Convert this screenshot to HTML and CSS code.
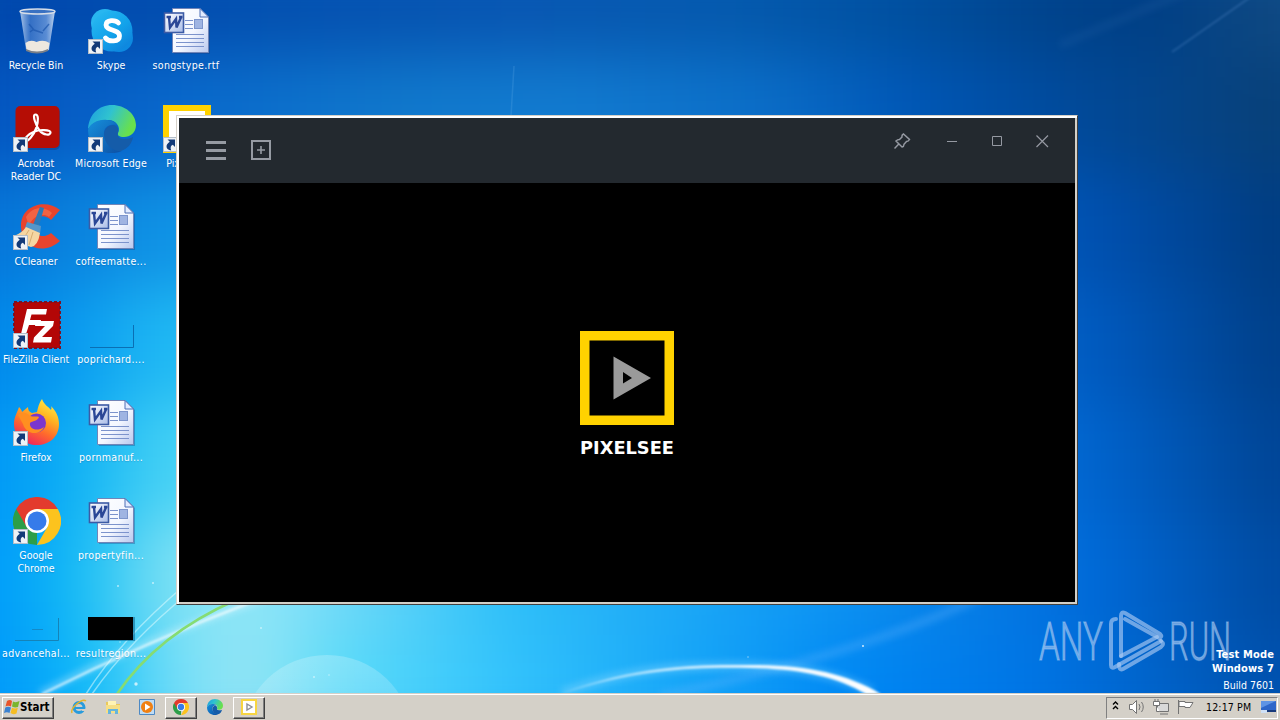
FILE: index.html
```html
<!DOCTYPE html>
<html lang="en">
<head>
<meta charset="utf-8">
<title>Desktop</title>
<link rel="stylesheet" href="styles.css">
</head>
<body>
<svg class="defs" aria-hidden="true">
  <defs>
    <linearGradient id="paper" x1="0" y1="0" x2="1" y2="1"><stop offset="0" stop-color="#fff"/><stop offset=".55" stop-color="#f4f7ff"/><stop offset="1" stop-color="#b9c8ee"/></linearGradient>
    <linearGradient id="wbox" x1="0" y1="0" x2="1" y2="1"><stop offset="0" stop-color="#fff"/><stop offset="1" stop-color="#a9bce8"/></linearGradient>
    <linearGradient id="edgeTop" x1="0" y1="0" x2="1" y2=".35"><stop offset="0" stop-color="#1b9de0"/><stop offset=".5" stop-color="#30c3cf"/><stop offset="1" stop-color="#68e04e"/></linearGradient>
    <linearGradient id="edgeLow" x1="0" y1="0" x2="1" y2="1"><stop offset="0" stop-color="#1690dc"/><stop offset="1" stop-color="#0c4fa4"/></linearGradient>
    <linearGradient id="fire" x1=".8" y1="0" x2=".3" y2="1"><stop offset="0" stop-color="#fff04a"/><stop offset=".35" stop-color="#ffb321"/><stop offset=".65" stop-color="#ff6a2c"/><stop offset="1" stop-color="#ee1f61"/></linearGradient>
    <symbol id="shortcut" viewBox="0 0 15 15">
      <rect x=".5" y=".5" width="14" height="14" fill="#eef2f6" stroke="#b4bec9"/>
      <path d="M4.500 2.500H12V10L9.800 7.800C7.800 8.500 7 10.500 8.200 13.500 2.500 13 2 7.500 6.800 4.800z" fill="#123a78"/>
    </symbol>
    <symbol id="word" viewBox="0 0 48 48">
      <path d="M11 2H38L47 11V47H11z" fill="#1c3f7e" opacity=".35"/>
      <path d="M9.500 1.500H37l8.500 8.500v35.500h-36z" fill="url(#paper)" stroke="#7185b8"/>
      <path d="M37 1.500V10h8.500z" fill="#e3ecff" stroke="#4f6fb5"/>
      <path d="M22 13.500h8M22 17.500h8M22 21.500h8M13 27.500h28M13 31.500h28M13 35.500h28M13 39.500h28" stroke="#7c93cc"/>
      <rect x="31.500" y="12.500" width="8" height="9" fill="#9fb4e2" stroke="#7d95cc"/>
      <rect x="1.500" y="6" width="19" height="19.500" fill="url(#wbox)" stroke="#3c5ba5" stroke-width="1.600"/>
      <path d="M3.500 10H8M16 10h3.500M6 10.500l1 10L13 12l.5 8.500L18 10.500" fill="none" stroke="#2a4696" stroke-width="2.400"/>
    </symbol>
    <symbol id="chrome" viewBox="0 0 48 48">
      <path d="M24 24V48A24 24 0 0 1 3.200 12z" fill="#2d9e49"/>
      <path d="M24 12H44.800A24 24 0 0 0 3.200 12L13.600 30z" fill="#e33b2e"/>
      <path d="M34.400 30L24 48A24 24 0 0 0 44.800 12H24z" fill="#fcc31e"/>
      <circle cx="24" cy="24" r="12" fill="#fff"/><circle cx="24" cy="24" r="9.500" fill="#367bea"/>
    </symbol>
    <symbol id="edge" viewBox="0 0 48 48">
      <path d="M0 24C1 9 11 0 24 0s24 9 24 20c0 8-6 12-12 12-5 0-7-2-6-4 3-5-1-13-10-13C11 15 4 18 0 24z" fill="url(#edgeTop)"/>
      <path d="M0 25C2 18 11 14 19 15c5 .600 8 2 10 5-8-2-14 3-13 10 1 9 9 16 18 16C17 53 0 43 0 25z" fill="url(#edgeLow)"/>
      <path d="M16 29c0-5 4-9 9-9 4 0 6 4 5 8-1 3 1 6 6 6 4 0 7-1 9-2-1 7-6 12-12 14-9 1-17-8-17-17z" fill="#155ca9"/>
    </symbol>
    <symbol id="pixel" viewBox="0 0 94 94">
      <rect x="4.750" y="4.750" width="84.500" height="84.500" fill="none" stroke="#ffd200" stroke-width="9.500"/>
      <path fill-rule="evenodd" d="M33.500 25.500L71 47 33.500 68.500zM43 41v11.500L52 47z" fill="#9a9a9a"/>
    </symbol>
  </defs>
</svg>
<main class="desktop">
  <div class="sky">
    <div class="band b1"></div><div class="band b2"></div><div class="band b3"></div><div class="band b4"></div><div class="band b5"></div><div class="band b6"></div><div class="band b7"></div>
  </div>
  <svg class="rays" viewBox="0 0 1280 720">
    <defs>
      <filter id="s1" x="-20%" y="-20%" width="140%" height="140%"><feGaussianBlur stdDeviation="1"/></filter>
      <filter id="s3" x="-20%" y="-50%" width="140%" height="200%"><feGaussianBlur stdDeviation="3.500"/></filter>
      <linearGradient id="halo" x1="0" y1="0" x2="0" y2="1"><stop offset="0" stop-color="#fff" stop-opacity=".22"/><stop offset="1" stop-color="#fff" stop-opacity="0"/></linearGradient>
      <linearGradient id="arc" x1="0" x2="1" y1="0" y2="0"><stop offset="0" stop-color="#fff" stop-opacity=".4"/><stop offset=".6" stop-color="#fff" stop-opacity=".9"/><stop offset="1" stop-color="#fff"/></linearGradient>
    </defs>
    <path d="M40 694Q150 635 290 590" fill="none" stroke="#fff" stroke-width="6" opacity=".35" filter="url(#s3)"/>
    <path d="M42 694Q150 640 270 595" fill="none" stroke="#fff" stroke-width="2.500" opacity=".65" filter="url(#s1)"/>
    <path d="M86 694Q120 640 185 585M92 694Q130 640 190 592" fill="none" stroke="#e6fdff" stroke-width="1.500" opacity=".5"/>
    <path d="M117 694Q158 634 236 600" fill="none" stroke="#86dc72" stroke-width="2.500"/>
    <ellipse cx="327" cy="735" rx="84" ry="80" fill="url(#halo)"/>
    <path d="M660 696Q860 655 985 595" fill="none" stroke="#6bb8ff" stroke-width="9" opacity=".28" filter="url(#s3)"/>
    <path d="M562 693C640 664 700 666 750 666C800 667 840 675 872 692" fill="none" stroke="#7fd4ff" stroke-width="9" opacity=".45" filter="url(#s3)"/>
    <path d="M560 694C640 664 700 665 750 665C805 665 845 673 881 694H866C835 676 800 669 750 668C700 667 640 668 560 694z" fill="url(#arc)" filter="url(#s1)"/>
    <path d="M1172 52L1252 -4" stroke="#5b8fce" stroke-width="2" opacity=".3" filter="url(#s1)"/>
    <path d="M1060 45L1190 -10" stroke="#4b80c0" stroke-width="8" opacity=".12" filter="url(#s3)"/>
    <path d="M514 66L511 116" stroke="#72b8ee" stroke-width="1.500" opacity=".2"/>
    <g fill="#fff"><circle cx="136" cy="684" r="1.700" opacity=".7"/><circle cx="118" cy="586" r="1" opacity=".6"/><circle cx="153" cy="583" r="1" opacity=".6"/><circle cx="120" cy="642" r=".8" opacity=".5"/><circle cx="261" cy="628" r="1" opacity=".5"/><circle cx="863" cy="646" r="1" opacity=".8"/><circle cx="748" cy="657" r=".8" opacity=".5"/><circle cx="314" cy="677" r="1" opacity=".5"/><circle cx="329" cy="675" r=".8" opacity=".5"/></g>
  </svg>

  <section class="icons">
    <div class="item"><svg viewBox="0 0 48 48"><defs><linearGradient id="bin"><stop offset="0" stop-color="#c9dcf4" stop-opacity=".85"/><stop offset=".3" stop-color="#5f8fd6" stop-opacity=".55"/><stop offset=".75" stop-color="#88aee6" stop-opacity=".65"/><stop offset="1" stop-color="#d6e4f5" stop-opacity=".9"/></linearGradient></defs><path d="M7 4H42L36 43Q24 48 13 43z" fill="url(#bin)"/><path d="M12.500 36q5-4 11-1 7-3 13 1l-1 7Q24 48 13.500 43z" fill="#eee8df"/><path d="M13 42q11 5 22 0v2q-11 5-22 0z" fill="#777e88"/><ellipse cx="24.500" cy="4.500" rx="17.500" ry="2.500" fill="#3971c2" stroke="#d6dde7" stroke-width="1.500"/><path d="M16 17l5 6 9 3M30 24l6-7M17 25l4-3" stroke="#1c57ae" stroke-width="1.500" fill="none" opacity=".7"/></svg><span class="label">Recycle Bin</span></div>
    <div class="item"><svg viewBox="0 0 48 48"><defs><linearGradient id="sky" x2=".8" y2="1"><stop offset="0" stop-color="#2bbcf2"/><stop offset=".6" stop-color="#12a2ea"/><stop offset="1" stop-color="#0f82dc"/></linearGradient></defs><circle cx="17" cy="16" r="14" fill="#28b6f0"/><circle cx="31" cy="31" r="14" fill="#0d8ae0"/><circle cx="24" cy="24" r="20.500" fill="url(#sky)"/><path d="M30.500 16C27.500 12.500 18 12.500 18 18C18 24 31.500 22 31.500 29C31.500 35.500 20.500 35 17.500 31" fill="none" stroke="#fff" stroke-width="4.800" stroke-linecap="round"/></svg><svg class="cut"><use href="#shortcut"/></svg><span class="label">Skype</span></div>
    <div class="item"><svg><use href="#word"/></svg><span class="label wide">songstype.rtf</span></div>

    <div class="item"><svg viewBox="0 0 48 48"><rect x="4" y="3" width="43" height="42" rx="5" fill="#123d82" opacity=".5"/><rect x="2.500" y="1" width="44" height="42" rx="5" fill="#b50d05"/><path d="M22.500 9.500c-4 0 1 12 4 16 4 5 11 5 11 2 0-3-12-3-16-1-5 2-11 7-9 9s8-5 11-13c2-7 2-13-1-13z" fill="none" stroke="#fff" stroke-width="2.200"/></svg><svg class="cut"><use href="#shortcut"/></svg><span class="label">Acrobat<br>Reader DC</span></div>
    <div class="item"><svg><use href="#edge"/></svg><svg class="cut"><use href="#shortcut"/></svg><span class="label mid">Microsoft Edge</span></div>
    <div class="item"><svg viewBox="0 0 48 48"><rect width="48" height="48" fill="#ffd200"/><rect x="6" y="6" width="36" height="36" fill="#fff"/></svg><svg class="cut"><use href="#shortcut"/></svg><span class="label">PixelSee</span></div>

    <div class="item"><svg viewBox="0 0 48 48"><path d="M47 7C33-5 7 2 8 24s24 28 39 14l-9-8c-9 7-17 1-17-7s9-14 17-6z" fill="#e8442d"/><path d="M39 10C33 4 20 2 13 14l3 9c4-11 15-13 20-9z" fill="#f36b48" opacity=".8"/><path d="M27 4l4 1-5 18-6-1z" fill="#2b79b7"/><path d="M14 19l14 4-1 8-15-6z" fill="#5496ca"/><path d="M13 24l14 6q-2 13-9 14Q5 41 1 33q8-3 12-9z" fill="#f5d6a2"/><path d="M16 27L9 38M20 29l-4 13" stroke="#d7ac70"/></svg><svg class="cut"><use href="#shortcut"/></svg><span class="label">CCleaner</span></div>
    <div class="item"><svg><use href="#word"/></svg><span class="label wide">coffeematte...</span></div>

    <div class="item"><svg viewBox="0 0 48 48"><rect x="1" y="1" width="46" height="46" fill="#b30606"/><rect x="1" y="1" width="46" height="46" fill="none" stroke="#7d1022" stroke-width="2" stroke-dasharray="3 2"/><path d="M8 33L14 8h20l-1 5.500H18.500L17 19h11l-1 5H16l-3 9z" fill="#fff"/><path d="M23 20h18l-1 5-11 11h10l-1 5.500H20l1-5L32 25h-10z" fill="#fff"/></svg><svg class="cut"><use href="#shortcut"/></svg><span class="label">FileZilla Client</span></div>
    <div class="item"><svg viewBox="0 0 48 48"><path d="M2 46.500H45.500V24" fill="none" stroke="#0a6fb4"/></svg><span class="label wide">poprichard....</span></div>

    <div class="item"><svg viewBox="0 0 48 48"><path d="M29 0c2 6 7 8 9 11 1-2 0-4 0-4 5 5 8 11 8 18 0 13-10 21-22 21S1 38 1 25C1 18 4 14 6 8c2 2 3 4 3 5l6-5c0 3 1 5 4 6l5-1C25 8 26 4 29 0z" fill="url(#fire)"/><circle cx="23.500" cy="24" r="9.500" fill="#7a36cf"/><path d="M5 16c5-4 9-2 12 1 3 1 8 0 9 1-1 4-7 4-9 6-1 6 7 9 14 4-4 9-18 8-21-3z" fill="#ff8f20"/></svg><svg class="cut"><use href="#shortcut"/></svg><span class="label">Firefox</span></div>
    <div class="item"><svg><use href="#word"/></svg><span class="label wide">pornmanuf...</span></div>

    <div class="item"><svg><use href="#chrome"/></svg><svg class="cut"><use href="#shortcut"/></svg><span class="label">Google<br>Chrome</span></div>
    <div class="item"><svg><use href="#word"/></svg><span class="label wide">propertyfin...</span></div>

    <div class="item"><svg viewBox="0 0 48 48"><path d="M2 45.500H45.500V23" fill="none" stroke="#1583b8"/><path d="M19 34.500H30" stroke="#138ac8"/></svg><span class="label wide">advancehal...</span></div>
    <div class="item"><svg viewBox="0 0 48 48"><rect x="1" y="22" width="46" height="24" fill="#126b95" opacity=".6"/><rect x="0" y="22" width="45" height="23"/></svg><span class="label wide">resultregion...</span></div>
  </section>

  <svg class="watermark" viewBox="0 0 200 70">
    <g class="wm-text"><text x="4" y="54" textLength="64" lengthAdjust="spacingAndGlyphs">ANY</text><text x="134" y="54" textLength="62" lengthAdjust="spacingAndGlyphs">RUN</text></g>
    <g fill="none" stroke="#a9caf2" stroke-opacity=".65" stroke-width="4" stroke-linejoin="round" stroke-linecap="round"><path d="M81 13Q76 13 76 18V59Q76 63 80 61L126 35"/><path d="M86 50V10Q86 5 90 7L125 28Q128 31 124 32L90 13"/><path d="M86 50L122 31M126 35Q130 38 126 41L88 63Q84 65 84 58"/></g>
  </svg>
  <div class="build"><b>Test Mode</b><b>Windows 7</b><span>Build 7601</span></div>

  <section class="window">
    <header class="titlebar">
      <svg class="menu" viewBox="0 0 68 22"><path d="M0 2.500H20M0 10.500H20M0 18.500H20" stroke="#969ba3" stroke-width="3"/><path d="M46 1H64V19H46z" fill="none" stroke="#969ba3" stroke-width="2"/><path d="M55 6v8M51 10h8" stroke="#969ba3" stroke-width="1.600"/></svg>
      <svg class="controls" viewBox="0 0 156 18"><g fill="none" stroke="#9599a2"><path d="M9.500 2L15.500 7.500Q14.500 9.500 12.500 9.500L10 12.200Q10 14.500 8 15L2 9Q3.500 7.500 5.500 7.500L8 5Q7.500 3 9.500 2zM4.800 12L.5 16.500" stroke-width="1.500"/><path d="M53 9.500H63M98.500 4.500H107.500V13.500H98.500z"/><path d="M142.500 3.500L154 15M154 3.500L142.500 15" stroke-width="1.200"/></g></svg>
    </header>
    <div class="stage"><svg class="logo"><use href="#pixel"/></svg><div class="brand">PIXELSEE</div></div>
  </section>

  <footer class="taskbar">
    <div class="start raised"><svg viewBox="0 0 16 16"><path d="M3 2Q6 0 8 2L7 7.500Q4 6 1.500 7.500z" fill="#e8542a"/><path d="M9 2.500Q12 4 15.500 2L14 8Q11 9 8 7.500z" fill="#7ab52e"/><path d="M1.300 8.500Q4 7 7 8.500L5.500 14Q3 12.500 0 14z" fill="#3b82d1"/><path d="M8 8.700Q11 10 13.800 8.800L12.500 14.500Q9 16 6.500 14z" fill="#f6bd23"/></svg><b>Start</b></div>
    <div class="quick">
      <span class="slot"><svg viewBox="0 0 16 16"><circle cx="8" cy="8.500" r="5" fill="none" stroke="#289bdc" stroke-width="3"/><path d="M4 9h9" stroke="#289bdc" stroke-width="2"/><path d="M10 10h6v2h-5z" fill="#d4d0c8"/><path d="M1 14C-1 9 11-1 15 2" fill="none" stroke="#e4b42c" stroke-width="1.500"/></svg></span>
      <span class="slot"><svg viewBox="0 0 16 16"><path d="M1 3h5l1 2h8v9H1z" fill="#e9c95c"/><path d="M3 2h8v5H3z" fill="#fff4b5"/><path d="M1 6h14v8H1z" fill="#f6df86"/><path d="M3 15v-5h10v5h-3v-3H6v3z" fill="#66b5dc"/></svg></span>
      <span class="slot"><svg viewBox="0 0 16 16"><path d="M.5.500h15v15H.5z" fill="#bfdcf4" stroke="#4d89c4"/><circle cx="8" cy="8" r="6" fill="#f08013"/><path d="M6 4.500l5.500 3.500L6 11.500z" fill="#fff"/></svg></span>
      <span class="slot raised"><svg><use href="#chrome"/></svg></span>
      <span class="slot"><svg><use href="#edge"/></svg></span>
      <span class="slot raised"><svg viewBox="0 0 16 16"><path d="M1 1h14v14H1z" fill="#fff" stroke="#f7d542" stroke-width="2"/><path d="M6 5l5 3-5 3z" fill="none" stroke="#8d8f97" stroke-width="1.400"/></svg></span>
    </div>
    <div class="tray">
      <svg viewBox="0 0 90 18"><path d="M4 6.500L6.500 4 9 6.500M4 11L6.500 8.500 9 11" fill="none" stroke="#000" stroke-width="1.400"/><g fill="#fff" stroke="#737373"><path d="M20.500 6.500h3l4-4v13l-4-4h-3z"/><path d="M30 6q2 3 0 6M32.500 4q3.500 5 0 10" fill="none"/><path d="M48.500 5.500h11v8h-11zM51 16h8" fill="#d9d9d9"/><path d="M44.500 3.500h6v4h-6zM46 1v3M49 1v3M47.500 7.500v6h3"/><path d="M69.500 2v14" /><path d="M70 3.500h6v1h8l-3 5h-5v-1h-6z"/></g></svg>
      <time>12:17 PM</time>
      <svg class="show" viewBox="0 0 16 14"><path d="M0 1h15v11H0z" fill="#2d66c9"/><path d="M0 1h15L0 8z" fill="#5e94e5"/><path d="M0 10h6v3H0z" fill="#cfe0f5"/><path d="M6 10h9v2H6z" fill="#183a7b"/></svg>
    </div>
  </footer>
</main>
</body>
</html>
```
FILE: styles.css
```css
* { box-sizing: border-box; }
body { margin: 0; font: 10.5px/13px "DejaVu Sans Condensed", "DejaVu Sans", sans-serif; overflow: hidden; }
.defs { position: absolute; width: 0; height: 0; }
.desktop { position: relative; width: 1280px; height: 720px; overflow: hidden; display: flex; flex-direction: column; justify-content: space-between; background: #0070d8; }
.sky { position: absolute; inset: -58px -60px -30px; display: flex; flex-direction: column; filter: blur(30px); }
.band { flex: 1; }
.b1 { background: linear-gradient(90deg, #0047ac 60px, #0350b0 300px, #0857b2 580px, #055aae 780px, #0050a0 960px, #00428a 1120px, #003f85 1220px, #104a82 1340px); }
.b2 { background: linear-gradient(90deg, #0456c0 60px, #0868cc 230px, #1078cc 460px, #127bd0 620px, #0b6ec8 820px, #0058b8 960px, #004a9c 1120px, #084078 1340px); }
.b3 { background: linear-gradient(90deg, #0575d8 60px, #1094e6 230px, #1094e6 600px, #0052b4 1140px, #003c80 1340px); }
.b4 { background: linear-gradient(90deg, #0088ea 60px, #0a9cf0 140px, #22bcf4 230px, #20b0f0 600px, #005cc4 1140px, #003f88 1340px); }
.b5 { background: linear-gradient(90deg, #0098f6 60px, #10b2f4 140px, #4ad4f4 230px, #30c0f4 600px, #0066d2 1140px, #004494 1340px); }
.b6 { background: linear-gradient(90deg, #009cfa 60px, #14bcf4 140px, #80e2f4 230px, #90e6f8 320px, #30c0f8 560px, #1098f4 860px, #006cdc 1140px, #004aa0 1340px); }
.b7 { background: linear-gradient(90deg, #0098fa 60px, #10bcf8 150px, #70def8 230px, #98e6f4 310px, #5cdcf8 390px, #34c4fc 560px, #14a4f8 760px, #0088f4 910px, #0074e4 1100px, #0050ac 1340px); }
.rays { position: absolute; inset: 0; width: 1280px; height: 720px; }

.icons { position: relative; display: grid; grid-template-columns: repeat(3, 75px); grid-auto-rows: 98px; margin: 7px 0 0 -1px; width: 225px; }
.item { position: relative; display: flex; flex-direction: column; align-items: center; gap: 4px; color: #fff; white-space: nowrap; text-align: center; }
.item > svg { width: 48px; height: 48px; flex: none; }
.item > .cut { position: absolute; left: 14px; top: 32px; width: 15px; height: 15px; }
.label { text-shadow: 0 1px 1px rgba(0, 40, 100, .2); margin-left: -1px; }
.mid { letter-spacing: .15px; }
.wide { letter-spacing: .33px; }
.item:nth-child(7), .item:nth-child(9), .item:nth-child(11), .item:nth-child(13), .item:nth-child(15) { grid-column: 1; }

.window { position: absolute; left: 176px; top: 115px; width: 902px; height: 490px; display: flex; flex-direction: column; border: 1px solid #d4d0c8; border-right-color: #404040; border-bottom-color: #404040; box-shadow: inset 2px 2px #fff, inset -2px -2px #d4d0c8; padding: 2px; background: #000; }
.titlebar { height: 65px; background: #23292f; display: flex; justify-content: space-between; padding: 14px 26px 0 27px; flex: none; }
.menu { width: 68px; height: 22px; margin-top: 8px; }
.controls { width: 156px; height: 18px; margin-right: -1px; }
.stage { flex: 1; background: #000; display: flex; flex-direction: column; align-items: center; padding-top: 148px; }
.logo { width: 94px; height: 94px; }
.brand { color: #fff; font: bold 17.8px/20px "DejaVu Sans", sans-serif; margin-top: 13px; }

.watermark { position: absolute; left: 1035px; top: 606px; width: 200px; height: 70px; overflow: visible; }
.wm-text { font: 300 53px Roboto, sans-serif; fill: #a9caf2; fill-opacity: .65; stroke: #a9caf2; stroke-opacity: .4; stroke-width: 1.4px; }
.build { position: absolute; right: 6px; top: 648px; display: flex; flex-direction: column; text-align: right; color: #fff; line-height: 14px; }
.build b { font-size: 11px; letter-spacing: .15px; }
.build span { margin-top: 2px; }

.taskbar { position: relative; height: 28px; background: #d4d0c8; border-top: 1px solid #d4d0c8; box-shadow: inset 0 1px #fff; display: flex; align-items: flex-start; padding: 3px 2px 0; }
.raised { border: 1px solid; border-color: #fff #404040 #404040 #fff; box-shadow: inset -1px -1px #808080; }
.start { width: 52px; height: 22px; display: flex; align-items: center; gap: 0; padding: 0 0 2px 1px; color: #000; }
.start b { font-size: 11.5px; }
.start svg { width: 16px; height: 16px; }
.quick { display: flex; margin-left: 9px; gap: 2px; }
.slot { width: 32px; height: 22px; display: grid; place-items: center; padding-bottom: 2px; }
.slot svg { width: 16px; height: 16px; }
.tray { margin-left: auto; width: 172px; height: 22px; border: 1px solid; border-color: #808080 #fff #fff #808080; display: flex; align-items: center; color: #000; padding-bottom: 2px; }
.tray svg { width: 90px; height: 18px; margin-left: 2px; flex: none; }
.tray time { margin-left: 7px; white-space: nowrap; letter-spacing: .15px; }
.tray .show { width: 16px; height: 14px; margin-left: auto; }
```
